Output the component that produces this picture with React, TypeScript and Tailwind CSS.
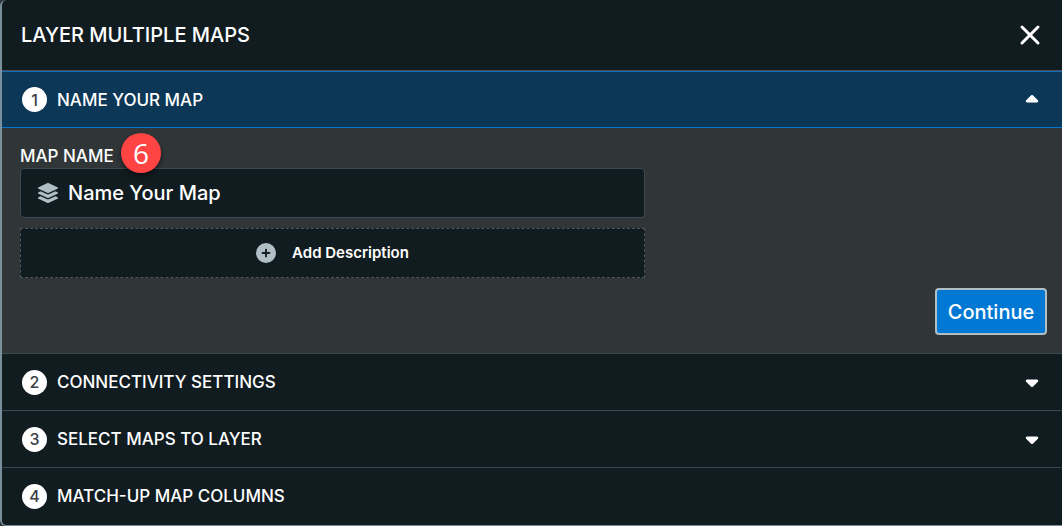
import { useState } from 'react';
import { X } from 'lucide-react';
import { FaCaretDown, FaCaretUp, FaCirclePlus, FaLayerGroup } from 'react-icons/fa6';

interface StepHeaderProps {
    step: number;
    title: string;
    active?: boolean;
    expandable?: boolean;
}

function StepHeader({ step, title, active = false, expandable = true }: StepHeaderProps) {
    return (
        <button
            type="button"
            aria-expanded={active}
            className={`w-full h-[57px] flex items-center px-5 text-left border-t ${active
                ? 'bg-[#0c3756] border-b border-t-[#0f6db5] border-b-[#0078d4]'
                : 'bg-[#111c21] border-[#3d4950]'
                }`}
        >
            <span className="w-[25px] h-[25px] mr-2.5 flex items-center justify-center rounded-full bg-white text-base font-medium text-[#3a4045]">
                {step}
            </span>
            <span className="flex-1 text-[17px] leading-6 font-medium">{title}</span>
            {expandable && (active
                ? <FaCaretUp className="h-5 w-5" />
                : <FaCaretDown className="h-5 w-5" />
            )}
        </button>
    );
}

export default function App() {
    const [name, setName] = useState('');

    return (
        <div className="bg-[#303538]">
            <section className="min-h-screen flex flex-col overflow-hidden rounded-l-md border-l-2 border-b border-[#78909c] bg-[#111c21] font-['Inter',sans-serif] text-white">
                <header className="h-[71px] flex items-center justify-between pl-[19px] pr-4 border-b border-[#4a4f53]">
                    <h1 className="text-xl font-medium">LAYER MULTIPLE MAPS</h1>
                    <button type="button" aria-label="Close">
                        <X className="h-8 w-8" strokeWidth={2.25} />
                    </button>
                </header>

                <StepHeader step={1} title="NAME YOUR MAP" active />

                <div className="flex flex-col bg-[#303538] pt-4 pb-[18px] pl-[18px] pr-[15px]">
                    <div className="relative self-start flex">
                        <label htmlFor="map-name" className="text-[17px] leading-6 font-medium">MAP NAME</label>
                        <span className="absolute z-10 left-[101px] -top-[11px] w-10 h-10 flex items-center justify-center rounded-full bg-[#ff4444] font-['Open_Sans',sans-serif] text-[28px] font-medium shadow-[0_3px_5px_rgba(0,0,0,0.5)]">
                            6
                        </span>
                    </div>
                    <div className="h-[50px] w-full max-w-[625px] flex items-center px-[15px] rounded border border-[#3d4950] bg-[#111c21]">
                        <FaLayerGroup className="h-5 w-6 mr-2 text-[#b0bec5]" />
                        <input
                            id="map-name"
                            type="text"
                            value={name}
                            onChange={(e) => setName(e.target.value)}
                            placeholder="Name Your Map"
                            className="flex-1 bg-transparent text-xl font-medium outline-none placeholder:text-white"
                        />
                    </div>
                    <button
                        type="button"
                        className="h-[50px] w-full max-w-[625px] mt-2.5 flex items-center justify-center border border-dashed border-[#4b565d] bg-[#111c21] text-[15px] font-semibold"
                    >
                        <FaCirclePlus className="h-5 w-5 mr-4 text-[#b0bec5]" />
                        Add Description
                    </button>
                    <button
                        type="button"
                        className="h-[47px] w-28 mt-2.5 self-end rounded border-2 border-[#b0bec5] bg-[#0078d4] text-xl font-medium"
                    >
                        Continue
                    </button>
                </div>

                <StepHeader step={2} title="CONNECTIVITY SETTINGS" />
                <StepHeader step={3} title="SELECT MAPS TO LAYER" />
                <StepHeader step={4} title="MATCH-UP MAP COLUMNS" expandable={false} />
            </section>
        </div>
    );
}
